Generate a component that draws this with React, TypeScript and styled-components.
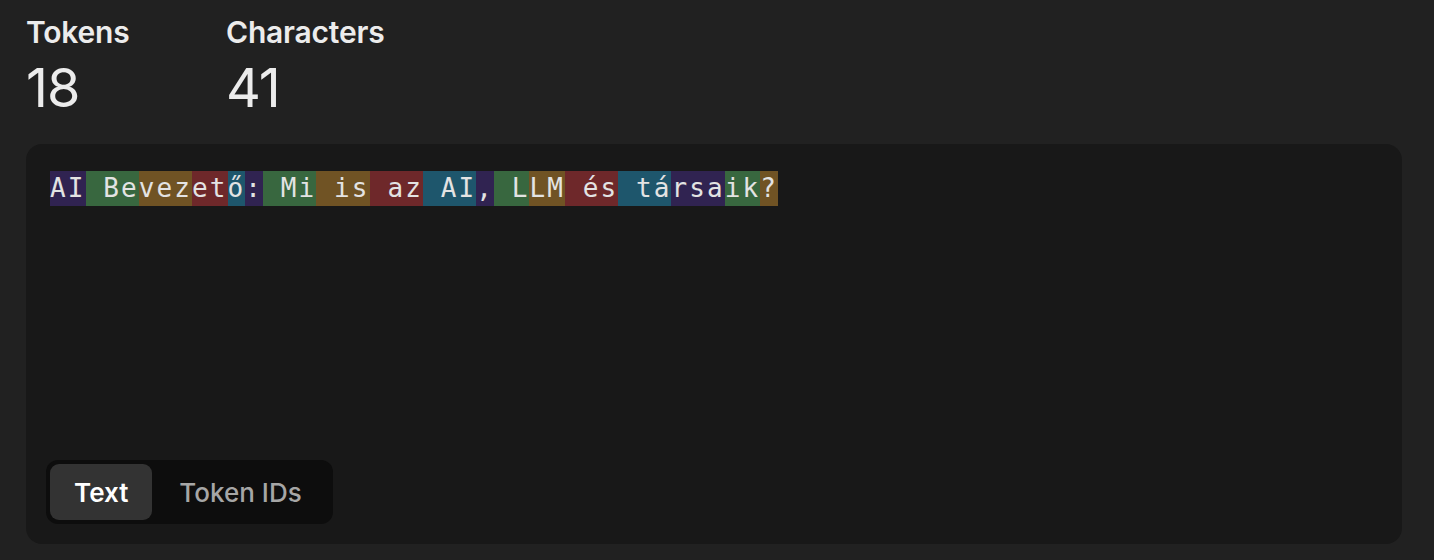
import styled, { createGlobalStyle } from 'styled-components';
import { useState } from 'react';

const GlobalStyle = createGlobalStyle`
  html, body {
    margin: 0;
    padding: 0;
    background: #212121;
  }
  body {
    font-family: Inter, "Noto Sans", sans-serif;
    color: #ececec;
  }
`;

const TOKEN_COLORS = [
  'rgba(107, 64, 216, 0.3)',
  'rgba(104, 222, 122, 0.4)',
  'rgba(244, 172, 54, 0.4)',
  'rgba(239, 65, 70, 0.4)',
  'rgba(39, 181, 234, 0.4)',
];

const TOKENS = [
  { text: 'AI', id: 17527 },
  { text: ' Be', id: 2672 },
  { text: 'vez', id: 87016 },
  { text: 'et', id: 292 },
  { text: 'ő', id: 5920 },
  { text: ':', id: 25 },
  { text: ' Mi', id: 11669 },
  { text: ' is', id: 382 },
  { text: ' az', id: 996 },
  { text: ' AI', id: 20837 },
  { text: ',', id: 11 },
  { text: ' L', id: 451 },
  { text: 'LM', id: 19641 },
  { text: ' és', id: 6085 },
  { text: ' tá', id: 38993 },
  { text: 'rsa', id: 43791 },
  { text: 'ik', id: 1985 },
  { text: '?', id: 30 },
];

export default function App() {
  const [mode, setMode] = useState<'text' | 'ids'>('text');
  const charCount = TOKENS.reduce((sum, t) => sum + t.text.length, 0);

  return (
    <>
      <GlobalStyle />
      <Page>
        <Stats>
          <Stat>
            <StatLabel>Tokens</StatLabel>
            <StatValue>{TOKENS.length}</StatValue>
          </Stat>
          <Stat>
            <StatLabel>Characters</StatLabel>
            <StatValue>{charCount}</StatValue>
          </Stat>
        </Stats>
        <Panel>
          <TokenText>
            {TOKENS.map((token, i) => (
              <Token key={i} $color={TOKEN_COLORS[i % TOKEN_COLORS.length]}>
                {mode === 'text' ? token.text : (i > 0 ? ', ' : '') + token.id}
              </Token>
            ))}
          </TokenText>
          <Toggle>
            <ToggleButton $active={mode === 'text'} onClick={() => setMode('text')}>
              Text
            </ToggleButton>
            <ToggleButton $active={mode === 'ids'} onClick={() => setMode('ids')}>
              Token IDs
            </ToggleButton>
          </Toggle>
        </Panel>
      </Page>
    </>
  );
}

const Page = styled.div`
  padding: 12px 32px 16px 26px;
`;

const Stats = styled.div`
  display: flex;
`;

const Stat = styled.div`
  width: 200px;
  display: flex;
  flex-direction: column;
  gap: 4px;
`;

const StatLabel = styled.div`
  font-size: 30px;
  line-height: 40px;
  font-weight: 600;
  letter-spacing: -0.2px;
  color: #ececec;
`;

const StatValue = styled.div`
  font-size: 54px;
  line-height: 64px;
  font-weight: 400;
  letter-spacing: -1px;
  color: #ececec;
`;

const Panel = styled.div`
  margin-top: 24px;
  height: 400px;
  box-sizing: border-box;
  background: #181818;
  border-radius: 16px;
  display: flex;
  flex-direction: column;
  justify-content: space-between;
  padding: 27px 24px 20px 20px;
`;

const TokenText = styled.div`
  padding-left: 4px;
  font-family: "DejaVu Sans Mono", "Liberation Mono", monospace;
  font-size: 26px;
  letter-spacing: 2.1px;
  color: #e3e3e3;
  line-height: 35px;
`;

const Token = styled.span<{ $color: string }>`
  display: inline-block;
  height: 35px;
  white-space: pre;
  background: ${p => p.$color};
`;

const Toggle = styled.div`
  display: inline-flex;
  align-self: flex-start;
  padding: 4px;
  background: #0d0d0d;
  border-radius: 12px;
`;

const ToggleButton = styled.button<{ $active: boolean }>`
  height: 56px;
  padding: 0 ${p => (p.$active ? '24px' : '27px')};
  border: none;
  border-radius: 9px;
  font-family: Inter, "Noto Sans", sans-serif;
  font-size: 26px;
  font-weight: ${p => (p.$active ? 600 : 500)};
  color: ${p => (p.$active ? '#ffffff' : '#a6a6a6')};
  background: ${p => (p.$active ? '#333333' : 'transparent')};
  cursor: pointer;
`;
